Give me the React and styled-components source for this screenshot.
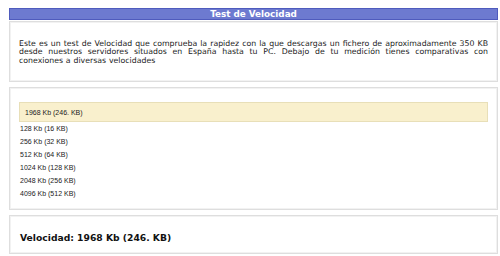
import React from 'react';
import styled, { createGlobalStyle } from 'styled-components';

const speeds = [
    '128 Kb (16 KB)',
    '256 Kb (32 KB)',
    '512 Kb (64 KB)',
    '1024 Kb (128 KB)',
    '2048 Kb (256 KB)',
    '4096 Kb (512 KB)',
];

function App() {
    return (
        <>
            <GlobalStyle />
            <Page>
                <TitleBar>Test de Velocidad</TitleBar>
                <Panel height="61px">
                    <Intro>
                        Este es un test de Velocidad que comprueba la rapidez con la que descargas un fichero de aproximadamente 350 KB desde nuestros servidores situados en España hasta tu PC. Debajo de tu medición tienes comparativas con conexiones a diversas velocidades
                    </Intro>
                </Panel>
                <Panel height="123px">
                    <List>
                        <Current>1968 Kb (246. KB)</Current>
                        {speeds.map((s) => (
                            <Item key={s}>{s}</Item>
                        ))}
                    </List>
                </Panel>
                <Panel height="39px">
                    <Result>Velocidad: 1968 Kb (246. KB)</Result>
                </Panel>
            </Page>
        </>
    );
}

export default App;

const GlobalStyle = createGlobalStyle`
    body {
        margin: 0;
        background: #ffffff;
        font-family: "DejaVu Sans", Verdana, sans-serif;
    }
`;

const Page = styled.div`
    width: 489px;
    padding: 8px 0 0 9px;
    display: flex;
    flex-direction: column;
    gap: 5px;
`;

const TitleBar = styled.div`
    height: 10px;
    margin-bottom: -4px;
    background: #6d7ad0;
    border: 1px solid #4f5bbd;
    color: #ffffff;
    font-size: 8.8px;
    font-weight: bold;
    line-height: 10px;
    text-align: center;
`;

const Panel = styled.div`
    box-sizing: border-box;
    height: ${(p) => p.height};
    border: 1px solid #dedede;
    box-shadow: inset 0 0 0 1px #f2f2f2;
    display: flex;
    flex-direction: column;
`;

const Intro = styled.p`
    margin: auto 0;
    padding: 2px 9px 0;
    color: #222222;
    font-size: 7.8px;
    line-height: 8.6px;
    word-spacing: 0.35px;
    text-align: justify;
`;

const List = styled.div`
    padding: 14px 9px 0 9px;
    display: flex;
    flex-direction: column;
    font-family: "Liberation Sans", Arial, sans-serif;
    font-size: 7px;
    color: #222222;
`;

const Current = styled.div`
    height: 18px;
    padding-left: 5px;
    display: flex;
    align-items: center;
    background: #f9f0cd;
    border: 1px solid #e8dfb8;
`;

const Item = styled.div`
    height: 13px;
    padding-left: 1px;
    display: flex;
    align-items: center;
`;

const Result = styled.div`
    margin: auto 0;
    padding: 6px 10px 0;
    font-size: 9.2px;
    font-weight: bold;
    color: #111111;
`;
